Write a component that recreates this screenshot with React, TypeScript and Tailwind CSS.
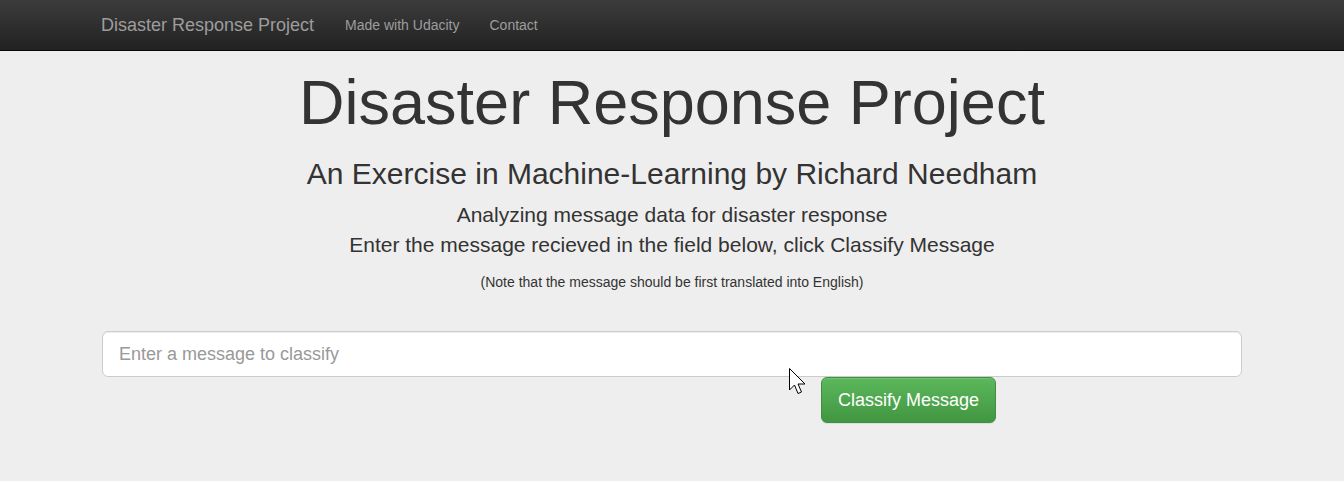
import React from "react";

export default function App() {
  return (
    <div className="min-h-screen bg-[#eee] text-[#333] font-['Liberation_Sans',Arial,sans-serif]">
      {/* Navbar */}
      <nav className="h-[51px] border-b border-[#080808] bg-gradient-to-b from-[#3c3c3c] to-[#222]">
        <div className="w-[1170px] mx-auto flex items-center h-[50px]">
          <a className="pl-[14px] pr-[16px] text-[18px] text-[#9d9d9d]">Disaster Response Project</a>
          <ul className="flex text-[14px] text-[#9d9d9d]">
            <li className="px-[15px]">Made with Udacity</li>
            <li className="px-[15px]">Contact</li>
          </ul>
        </div>
      </nav>

      {/* Jumbotron */}
      <div className="relative">
        <div className="w-[1170px] mx-auto px-[15px] text-center">
          <h1 className="pt-[17px] text-[63px] leading-[1.1]">Disaster Response Project</h1>
          <h2 className="mt-[20px] mb-[10px] text-[30px] leading-[1.1]">
            An Exercise in Machine-Learning by Richard Needham
          </h2>
          <p className="text-[21px] leading-[30px]">Analyzing message data for disaster response</p>
          <p className="text-[21px] leading-[30px]">
            Enter the message recieved in the field below, click Classify Message
          </p>
          <p className="mt-[12px] text-[14px] leading-[20px]">
            (Note that the message should be first translated into English)
          </p>

          <form className="mt-[39px] text-left">
            <input
              type="text"
              placeholder="Enter a message to classify"
              className="w-full h-[46px] px-[16px] text-[18px] bg-white border border-[#ccc] rounded-[6px] shadow-[inset_0_1px_1px_rgba(0,0,0,0.075)] placeholder:text-[#999] outline-none"
            />
            <div className="flex">
              <button
                type="button"
                className="ml-[719px] h-[46px] px-[16px] text-[18px] text-white rounded-[6px] border border-[#3e8f3e] bg-gradient-to-b from-[#5cb85c] to-[#419641] shadow-[inset_0_1px_0_rgba(255,255,255,0.15),0_1px_1px_rgba(0,0,0,0.075)]"
              >
                Classify Message
              </button>
            </div>
          </form>
        </div>

        {/* mouse cursor */}
        <svg
          className="absolute left-[788px] top-[316px]"
          width="20"
          height="30"
          viewBox="0 0 20 30"
        >
          <path
            d="M1.5 1.5 L1.5 23 L6.5 18 L10 26.5 L13.5 25 L10 17 L17 17 Z"
            fill="#fff"
            stroke="#000"
            strokeWidth="1"
            strokeLinejoin="miter"
          />
        </svg>
      </div>
    </div>
  );
}
